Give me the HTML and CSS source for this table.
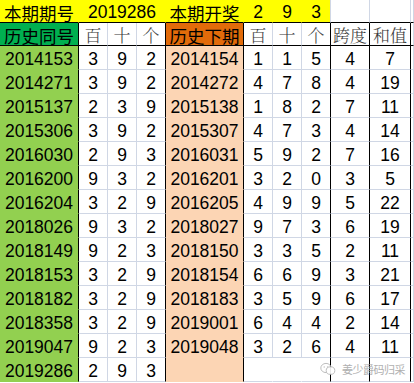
FILE: index.html
```html
<!DOCTYPE html>
<html lang="zh-CN">
<head>
<meta charset="utf-8">
<title>历史同号</title>
<link rel="stylesheet" href="styles.css">
</head>
<body>
<div class="sheet">
  <div class="c y cn">本期期号</div>
  <div class="c y span3">2019286</div>
  <div class="c y cn">本期开奖</div>
  <div class="c y">2</div>
  <div class="c y">9</div>
  <div class="c y last-y">3</div>
  <div class="c t"></div>
  <div class="c t"></div>
  <div class="c t"></div>

  <div class="c h hg cn bk">历史同号</div>
  <div class="c h hs">百</div>
  <div class="c h hs">十</div>
  <div class="c h hs bk">个</div>
  <div class="c h ho cn bk">历史下期</div>
  <div class="c h hs">百</div>
  <div class="c h hs">十</div>
  <div class="c h hs bk">个</div>
  <div class="c h hs bk">跨度</div>
  <div class="c h hs bk">和值</div>
  <div class="c h"></div>

  <div class="c g bk">2014153</div><div class="c">3</div><div class="c">9</div><div class="c bk">2</div>
  <div class="c p bk">2014154</div><div class="c">1</div><div class="c">1</div><div class="c bk">5</div><div class="c bk">4</div><div class="c bk">7</div><div class="c"></div>

  <div class="c g bk">2014271</div><div class="c">3</div><div class="c">9</div><div class="c bk">2</div>
  <div class="c p bk">2014272</div><div class="c">4</div><div class="c">7</div><div class="c bk">8</div><div class="c bk">4</div><div class="c bk">19</div><div class="c"></div>

  <div class="c g bk">2015137</div><div class="c">2</div><div class="c">3</div><div class="c bk">9</div>
  <div class="c p bk">2015138</div><div class="c">1</div><div class="c">8</div><div class="c bk">2</div><div class="c bk">7</div><div class="c bk">11</div><div class="c"></div>

  <div class="c g bk">2015306</div><div class="c">3</div><div class="c">9</div><div class="c bk">2</div>
  <div class="c p bk">2015307</div><div class="c">4</div><div class="c">7</div><div class="c bk">3</div><div class="c bk">4</div><div class="c bk">14</div><div class="c"></div>

  <div class="c g bk">2016030</div><div class="c">2</div><div class="c">9</div><div class="c bk">3</div>
  <div class="c p bk">2016031</div><div class="c">5</div><div class="c">9</div><div class="c bk">2</div><div class="c bk">7</div><div class="c bk">16</div><div class="c"></div>

  <div class="c g bk">2016200</div><div class="c">9</div><div class="c">3</div><div class="c bk">2</div>
  <div class="c p bk">2016201</div><div class="c">3</div><div class="c">2</div><div class="c bk">0</div><div class="c bk">3</div><div class="c bk">5</div><div class="c"></div>

  <div class="c g bk">2016204</div><div class="c">3</div><div class="c">2</div><div class="c bk">9</div>
  <div class="c p bk">2016205</div><div class="c">4</div><div class="c">9</div><div class="c bk">9</div><div class="c bk">5</div><div class="c bk">22</div><div class="c"></div>

  <div class="c g bk">2018026</div><div class="c">9</div><div class="c">3</div><div class="c bk">2</div>
  <div class="c p bk">2018027</div><div class="c">9</div><div class="c">7</div><div class="c bk">3</div><div class="c bk">6</div><div class="c bk">19</div><div class="c"></div>

  <div class="c g bk">2018149</div><div class="c">9</div><div class="c">2</div><div class="c bk">3</div>
  <div class="c p bk">2018150</div><div class="c">3</div><div class="c">3</div><div class="c bk">5</div><div class="c bk">2</div><div class="c bk">11</div><div class="c"></div>

  <div class="c g bk">2018153</div><div class="c">3</div><div class="c">2</div><div class="c bk">9</div>
  <div class="c p bk">2018154</div><div class="c">6</div><div class="c">6</div><div class="c bk">9</div><div class="c bk">3</div><div class="c bk">21</div><div class="c"></div>

  <div class="c g bk">2018182</div><div class="c">3</div><div class="c">2</div><div class="c bk">9</div>
  <div class="c p bk">2018183</div><div class="c">3</div><div class="c">5</div><div class="c bk">9</div><div class="c bk">6</div><div class="c bk">17</div><div class="c"></div>

  <div class="c g bk">2018358</div><div class="c">3</div><div class="c">2</div><div class="c bk">9</div>
  <div class="c p bk">2019001</div><div class="c">6</div><div class="c">4</div><div class="c bk">4</div><div class="c bk">2</div><div class="c bk">14</div><div class="c"></div>

  <div class="c g bk">2019047</div><div class="c">9</div><div class="c">2</div><div class="c bk">3</div>
  <div class="c p bk">2019048</div><div class="c">3</div><div class="c">2</div><div class="c bk">6</div><div class="c bk">4</div><div class="c bk">11</div><div class="c"></div>

  <div class="c g bk">2019286</div><div class="c">2</div><div class="c">9</div><div class="c bk">3</div>
  <div class="c p bk"></div><div class="c blank"></div><div class="c blank"></div><div class="c bk"></div><div class="c bk"></div><div class="c bk"></div><div class="c"></div>
</div>

<div class="mark">
  <svg class="mark-icon" width="16" height="14" viewBox="0 0 16 14">
    <ellipse cx="6" cy="6" rx="5.2" ry="4.6" fill="none" stroke="#b8b8b8" stroke-width="1"/>
    <ellipse cx="10.5" cy="8.6" rx="4.3" ry="3.8" fill="#fff" stroke="#b8b8b8" stroke-width="1"/>
    <circle cx="4.2" cy="5" r="0.7" fill="#b8b8b8"/>
    <circle cx="7.6" cy="5" r="0.7" fill="#b8b8b8"/>
  </svg>
  <span class="mark-text">姜少爵码归采</span>
</div>
</body>
</html>
```

FILE: styles.css
```css
:root {
  --grid: #d0d7e5;
  --black: #000;
  --yellow: #ffff00;
  --green-h: #00b050;
  --green: #92d050;
  --orange: #e26b0a;
  --peach: #fcd5b4;
}

html, body {
  margin: 0;
  padding: 0;
  background: #fff;
}

body {
  width: 414px;
  height: 383px;
  overflow: hidden;
  position: relative;
  font-family: "Liberation Sans", Arial, "Noto Sans CJK SC", sans-serif;
  color: #000;
}

.sheet {
  display: grid;
  grid-template-columns: 79px 29px 29px 29px 78px 29px 29px 29px 39px 41px 1fr;
  grid-template-rows: 23px 23px repeat(14, 24px);
}

.c {
  box-sizing: border-box;
  display: flex;
  align-items: center;
  justify-content: center;
  padding-top: 2px;
  border-right: 1px solid var(--grid);
  border-bottom: 1px solid var(--grid);
  font-size: 17.5px;
  line-height: 20px;
  white-space: nowrap;
}

.cn {
  font-family: "Noto Sans CJK SC", sans-serif;
  font-size: 17.5px;
  line-height: 18px;
  padding-top: 3px;
}

.y {
  background: var(--yellow);
  border-right-color: var(--yellow);
  border-bottom-color: var(--black);
}

.last-y {
  border-right-color: var(--grid);
}

.span3 {
  grid-column: span 3;
}

.t {
  border-bottom-color: var(--black);
}

.h {
  border-bottom-color: var(--black);
}

.hs {
  font-family: "Noto Serif CJK SC", "Noto Sans CJK SC", serif;
  font-weight: 300;
  color: #3a3a3a;
  font-size: 17px;
  padding-top: 1px;
}

.hg {
  background: var(--green-h);
}

.ho {
  background: var(--orange);
}

.bk {
  border-right-color: var(--black);
}

.g {
  background: var(--green);
  border-bottom-color: var(--green);
}

.p {
  background: var(--peach);
  border-bottom-color: var(--peach);
}

.blank {
  border-right-color: #fff;
}

.mark {
  position: absolute;
  left: 320px;
  top: 362px;
  display: flex;
  align-items: center;
  gap: 6px;
  opacity: 0.9;
}

.mark-icon {
  display: block;
}

.mark-text {
  font-family: "Noto Sans CJK SC", sans-serif;
  font-size: 11px;
  color: #a8a8a8;
  line-height: 14px;
  letter-spacing: -0.5px;
}
```
